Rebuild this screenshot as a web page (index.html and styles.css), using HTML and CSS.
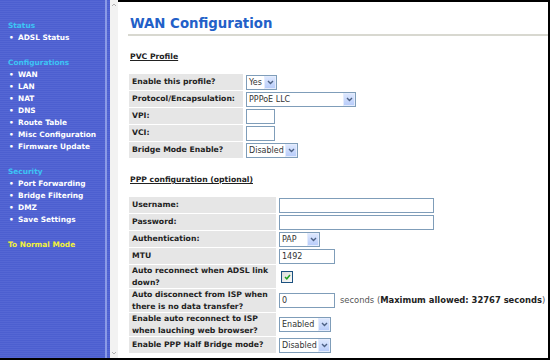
FILE: index.html
```html
<!DOCTYPE html>
<html lang="en">
<head>
    <meta charset="UTF-8">
    <title>WAN Configuration</title>
    <link rel="stylesheet" href="styles.css">
</head>
<body>
    <div class="page">
        <nav class="sidebar">
            <div class="nav-group">
                <div class="nav-title">Status</div>
                <ul class="nav-list">
                    <li>ADSL Status</li>
                </ul>
            </div>
            <div class="nav-group">
                <div class="nav-title">Configurations</div>
                <ul class="nav-list">
                    <li>WAN</li>
                    <li>LAN</li>
                    <li>NAT</li>
                    <li>DNS</li>
                    <li>Route Table</li>
                    <li>Misc Configuration</li>
                    <li>Firmware Update</li>
                </ul>
            </div>
            <div class="nav-group">
                <div class="nav-title">Security</div>
                <ul class="nav-list">
                    <li>Port Forwarding</li>
                    <li>Bridge Filtering</li>
                    <li>DMZ</li>
                    <li>Save Settings</li>
                </ul>
            </div>
            <div class="nav-title mode">To Normal Mode</div>
        </nav>

        <div class="gutter">
            <svg width="6" height="4" viewBox="0 0 6 4"><path d="M1 3l2-2 2 2" stroke="#b0b0b0" fill="none"/></svg>
            <svg width="6" height="4" viewBox="0 0 6 4"><path d="M1 1l2 2 2-2" stroke="#b0b0b0" fill="none"/></svg>
        </div>

        <main class="content">
            <h1>WAN Configuration</h1>
            <div class="rule"></div>

            <h2>PVC Profile</h2>
            <table class="form form-pvc">
                <tr>
                    <th>Enable this profile?</th>
                    <td><span class="select w-yes"><span class="val">Yes</span><span class="btn"><svg width="7" height="5" viewBox="0 0 7 5"><path d="M1 1l2.5 2.5L6 1" stroke="#4d6185" stroke-width="1.4" fill="none"/></svg></span></span></td>
                </tr>
                <tr>
                    <th>Protocol/Encapsulation:</th>
                    <td><span class="select w-proto"><span class="val">PPPoE LLC</span><span class="btn"><svg width="7" height="5" viewBox="0 0 7 5"><path d="M1 1l2.5 2.5L6 1" stroke="#4d6185" stroke-width="1.4" fill="none"/></svg></span></span></td>
                </tr>
                <tr>
                    <th>VPI:</th>
                    <td><input class="field w-vpi" type="text" value=""></td>
                </tr>
                <tr>
                    <th>VCI:</th>
                    <td><input class="field w-vpi" type="text" value=""></td>
                </tr>
                <tr>
                    <th>Bridge Mode Enable?</th>
                    <td><span class="select w-dis"><span class="val">Disabled</span><span class="btn"><svg width="7" height="5" viewBox="0 0 7 5"><path d="M1 1l2.5 2.5L6 1" stroke="#4d6185" stroke-width="1.4" fill="none"/></svg></span></span></td>
                </tr>
            </table>

            <h2>PPP configuration (optional)</h2>
            <table class="form form-ppp">
                <tr>
                    <th>Username:</th>
                    <td><input class="field w-user" type="text" value=""></td>
                </tr>
                <tr>
                    <th>Password:</th>
                    <td><input class="field w-user" type="password" value=""></td>
                </tr>
                <tr>
                    <th>Authentication:</th>
                    <td><span class="select w-pap"><span class="val">PAP</span><span class="btn"><svg width="7" height="5" viewBox="0 0 7 5"><path d="M1 1l2.5 2.5L6 1" stroke="#4d6185" stroke-width="1.4" fill="none"/></svg></span></span></td>
                </tr>
                <tr>
                    <th>MTU</th>
                    <td><input class="field w-mtu" type="text" value="1492"></td>
                </tr>
                <tr>
                    <th>Auto reconnect when ADSL link down?</th>
                    <td>
                        <span class="check">
                            <svg width="7" height="6" viewBox="0 0 7 6"><path d="M1 3l1.8 1.8L6 1" stroke="#21a121" stroke-width="1.5" fill="none"/></svg>
                        </span>
                    </td>
                </tr>
                <tr>
                    <th>Auto disconnect from ISP when there is no data transfer?</th>
                    <td class="nowrap"><input class="field w-mtu" type="text" value="0"><span class="hint">seconds (<b>Maximum allowed: 32767 seconds</b>)</span></td>
                </tr>
                <tr>
                    <th>Enable auto reconnect to ISP when lauching web browser?</th>
                    <td><span class="select w-en"><span class="val">Enabled</span><span class="btn"><svg width="7" height="5" viewBox="0 0 7 5"><path d="M1 1l2.5 2.5L6 1" stroke="#4d6185" stroke-width="1.4" fill="none"/></svg></span></span></td>
                </tr>
                <tr>
                    <th>Enable PPP Half Bridge mode?</th>
                    <td><span class="select w-dis"><span class="val">Disabled</span><span class="btn"><svg width="7" height="5" viewBox="0 0 7 5"><path d="M1 1l2.5 2.5L6 1" stroke="#4d6185" stroke-width="1.4" fill="none"/></svg></span></span></td>
                </tr>
            </table>
        </main>
    </div>
</body>
</html>
```

FILE: styles.css
```css
body {
    margin: 0;
    font-family: "DejaVu Sans", Verdana, sans-serif;
    font-size: 7.7px;
    color: #222;
    background: #fff;
}

.page {
    display: flex;
    height: 358px;
    border-bottom: 2px solid #000;
}

/* left menu frame */
.sidebar {
    width: 110px;
    flex: none;
    box-sizing: border-box;
    padding: 20px 0 0 8px;
    background:
        linear-gradient(to right, transparent 105px, #8a9ae6 105px, #8a9ae6 107px, transparent 107px),
        repeating-linear-gradient(#4c5fd0 0 1px, #5567d4 1px 2px);
    color: #fff;
    font-size: 7.4px;
    font-weight: bold;
    line-height: 12px;
}

.nav-group {
    margin-bottom: 13px;
}

.nav-title {
    color: #3cc4f4;
}

.nav-title.mode {
    color: #f2f23a;
}

.nav-list {
    list-style: none;
    margin: 0;
    padding: 0;
}

.nav-list li::before {
    content: "\2022";
    display: inline-block;
    width: 9px;
    padding-left: 1px;
}

.gutter {
    width: 8px;
    flex: none;
    background: #f2f2f2;
    display: flex;
    flex-direction: column;
    justify-content: space-between;
    align-items: center;
    padding: 3px 0;
    box-sizing: border-box;
}

/* main frame */
.content {
    flex: 1;
    border-top: 2px solid #000;
    border-right: 2px solid #000;
    padding: 14px 0 0 12px;
}

h1 {
    margin: 0;
    font-size: 13.3px;
    line-height: 16px;
    color: #2260c8;
}

.rule {
    height: 2px;
    background: #d8d8d0;
    margin: 2px 0 0 -2px;
}

h2 {
    margin: 15px 0 11px;
    font-size: 7.7px;
    line-height: 11px;
    text-decoration: underline;
    color: #222;
}

.form {
    border-collapse: separate;
    border-spacing: 2px 1px;
    margin-left: -3px;
}

.form th {
    background: #e6e6e6;
    text-align: left;
    padding: 0 3px;
    height: 16px;
    line-height: 11.5px;
    color: #222;
}

.form-pvc th {
    width: 108px;
}

.form-ppp th {
    width: 141px;
}

.form td {
    padding: 0 0 0 1px;
    vertical-align: middle;
}

.nowrap {
    white-space: nowrap;
}

.select {
    display: inline-flex;
    align-items: center;
    height: 15px;
    box-sizing: border-box;
    border: 1px solid #7f9db9;
    background: #fff;
    color: #333;
    font-size: 8px;
    vertical-align: middle;
}

.select .val {
    flex: 1;
    padding-left: 2px;
    line-height: 13px;
}

.select .btn {
    width: 12px;
    height: 13px;
    box-sizing: border-box;
    border: 1px solid #e4ecfd;
    background: linear-gradient(#dce7fe, #b9cdfa);
    display: flex;
    align-items: center;
    justify-content: center;
}

.field {
    height: 15px;
    box-sizing: border-box;
    border: 1px solid #7f9db9;
    padding: 0 2px;
    margin: 0;
    font: 8px "DejaVu Sans", Verdana, sans-serif;
    color: #333;
    vertical-align: middle;
}

.w-yes { width: 31px; }
.w-proto { width: 110px; }
.w-dis { width: 52px; }
.w-pap { width: 41px; }
.w-en { width: 52px; }
.w-vpi { width: 29px; }
.w-user { width: 155px; }
.w-mtu { width: 56px; }

.check {
    display: inline-flex;
    align-items: center;
    justify-content: center;
    width: 10px;
    height: 10px;
    margin-left: 2px;
    border: 1px solid #1c5180;
    background: linear-gradient(135deg, #dcdcd7, #fbfbfb);
    vertical-align: middle;
}

.hint {
    margin-left: 5px;
    font-size: 8.4px;
    color: #555;
}

.hint b {
    color: #222;
}
```
